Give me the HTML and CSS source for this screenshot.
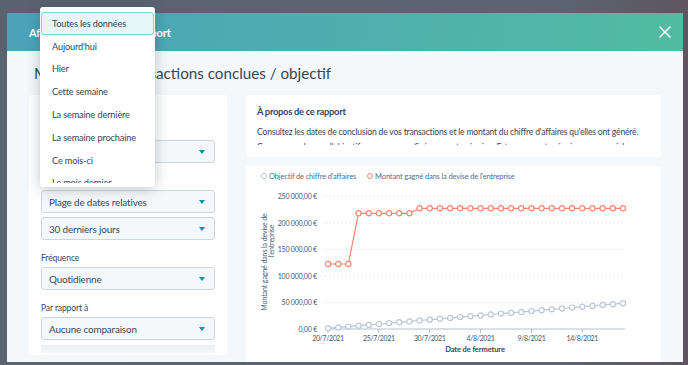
FILE: index.html
```html
<!DOCTYPE html>
<html lang="fr">
<head>
<meta charset="utf-8">
<title>Montant des transactions conclues / objectif</title>
<link rel="stylesheet" href="styles.css">
</head>
<body>
<div class="overlay">
  <div class="modal">
    <header class="modal-header">
      <h1 class="modal-title">Afficher un aperçu du rapport</h1>
      <button class="close" aria-label="Fermer">
        <svg width="12" height="12" viewBox="0 0 12 12"><path d="M1 1L11 11M11 1L1 11" stroke="#fff" stroke-width="1.5" stroke-linecap="round"/></svg>
      </button>
    </header>
    <div class="modal-body">
      <h2 class="report-title">Montant des transactions conclues / objectif</h2>
      <div class="layout">
        <aside class="filters">
          <div class="filters-title">Filtres</div>
          <label class="field-label">Propriété de date</label>
          <div class="select">Date de fermeture<span class="caret"></span></div>
          <label class="field-label">Plage de dates</label>
          <div class="select">Plage de dates relatives<span class="caret"></span></div>
          <div class="select">30 derniers jours<span class="caret"></span></div>
          <label class="field-label">Fréquence</label>
          <div class="select">Quotidienne<span class="caret"></span></div>
          <label class="field-label">Par rapport à</label>
          <div class="select">Aucune comparaison<span class="caret"></span></div>
          <div class="fade-block"></div>
        </aside>
        <div class="right">
          <section class="about">
            <h3>À propos de ce rapport</h3>
            <p>Consultez les dates de conclusion de vos transactions et le montant du chiffre d'affaires qu'elles ont généré. Comparez cela avec l'objectif que vous avez fixé pour votre équipe. Est-ce que votre équipe commerciale atteint ses objectifs ?</p>
          </section>
          <section class="chart-card">
            <div class="legend">
              <span class="legend-item"><span class="ring ring-gray"></span>Objectif de chiffre d'affaires</span>
              <span class="legend-item"><span class="ring ring-orange"></span>Montant gagné dans la devise de l'entreprise</span>
            </div>
            <svg class="chart" width="415" height="178" viewBox="0 0 415 178">
              <defs>
                <marker id="dot-orange" markerUnits="userSpaceOnUse" markerWidth="8" markerHeight="8" refX="4" refY="4" viewBox="0 0 8 8">
                  <circle cx="4" cy="4" r="2.6" fill="#fff" stroke="#f3876e" stroke-width="1.2"/>
                </marker>
                <marker id="dot-gray" markerUnits="userSpaceOnUse" markerWidth="8" markerHeight="8" refX="4" refY="4" viewBox="0 0 8 8">
                  <circle cx="4" cy="4" r="2.6" fill="#fff" stroke="#bcc6d6" stroke-width="1.2"/>
                </marker>
              </defs>
              <g class="grid">
                <line x1="79" y1="12.5" x2="379" y2="12.5"/>
                <line x1="79" y1="39" x2="379" y2="39"/>
                <line x1="79" y1="65.5" x2="379" y2="65.5"/>
                <line x1="79" y1="92" x2="379" y2="92"/>
                <line x1="79" y1="118.5" x2="379" y2="118.5"/>
              </g>
              <g class="ylabels">
                <text x="71" y="15">250 000,00 €</text>
                <text x="71" y="41.5">200 000,00 €</text>
                <text x="71" y="68">150 000,00 €</text>
                <text x="71" y="94.5">100 000,00 €</text>
                <text x="71" y="121">50 000,00 €</text>
                <text x="71" y="147.5">0,00 €</text>
              </g>
              <g class="ytitle">
                <text transform="translate(20.5 78) rotate(-90)">Montant gagné dans la devise de</text>
                <text transform="translate(27.5 57) rotate(-90)">l'entreprise</text>
              </g>
              <line class="axis" x1="79" y1="145" x2="379" y2="145"/>
              <g class="ticks">
                <line x1="82" y1="145" x2="82" y2="149"/>
                <line x1="132.85" y1="145" x2="132.85" y2="149"/>
                <line x1="183.7" y1="145" x2="183.7" y2="149"/>
                <line x1="234.55" y1="145" x2="234.55" y2="149"/>
                <line x1="285.4" y1="145" x2="285.4" y2="149"/>
                <line x1="336.25" y1="145" x2="336.25" y2="149"/>
              </g>
              <g class="xlabels">
                <text x="82" y="156.5">20/7/2021</text>
                <text x="132.85" y="156.5">25/7/2021</text>
                <text x="183.7" y="156.5">30/7/2021</text>
                <text x="234.55" y="156.5">4/8/2021</text>
                <text x="285.4" y="156.5">9/8/2021</text>
                <text x="336.25" y="156.5">14/8/2021</text>
              </g>
              <text class="xtitle" x="229" y="167.5">Date de fermeture</text>
              <polyline class="series-gray" points="82,144.3 92.17,143.4 102.34,142.6 112.51,141.7 122.68,140.9 132.85,140 143.02,139.1 153.19,138.3 163.36,137.4 173.53,136.5 183.7,135.7 193.87,134.8 204.04,133.9 214.21,133.1 224.38,132.2 234.55,131.4 244.72,130.5 254.89,129.6 265.06,128.8 275.23,127.9 285.4,127.1 295.57,126.2 305.74,125.3 315.91,124.5 326.08,123.6 336.25,122.7 346.42,121.9 356.59,121 366.76,120.2 376.93,119.3"/>
              <polyline class="series-orange" points="82,80 92.17,80 102.34,80 112.51,29.3 122.68,29.3 132.85,29.3 143.02,29.3 153.19,29.3 163.36,29.3 173.53,24.3 183.7,24.3 193.87,24.3 204.04,24.3 214.21,24.3 224.38,24.3 234.55,24.3 244.72,24.3 254.89,24.3 265.06,24.3 275.23,24.3 285.4,24.3 295.57,24.3 305.74,24.3 315.91,24.3 326.08,24.3 336.25,24.3 346.42,24.3 356.59,24.3 366.76,24.3 376.93,24.3"/>
            </svg>
          </section>
        </div>
      </div>
    </div>
  </div>
  <div class="menu">
    <ul class="menu-list">
      <li class="active">Toutes les données</li>
      <li>Aujourd'hui</li>
      <li>Hier</li>
      <li>Cette semaine</li>
      <li>La semaine dernière</li>
      <li>La semaine prochaine</li>
      <li>Ce mois-ci</li>
      <li>Le mois dernier</li>
    </ul>
  </div>
</div>
</body>
</html>
```

FILE: styles.css
```css
* { box-sizing: border-box; }

html, body {
  margin: 0;
  height: 365px;
  overflow: hidden;
}

body {
  font-family: Lato, "Open Sans", sans-serif;
  color: #33475b;
  background: linear-gradient(90deg, #59636f 0%, #5b6572 80%, #5e5560 100%);
}

.overlay {
  position: relative;
  height: 365px;
  padding: 13px 5px 0 7px;
}

.modal {
  height: 349px;
  display: flex;
  flex-direction: column;
  background: #f5f8fa;
  overflow: hidden;
}

.modal-header {
  height: 38px;
  flex: none;
  display: flex;
  align-items: center;
  justify-content: space-between;
  padding: 0 12px 0 22px;
  background: linear-gradient(95deg, #4aa3ba 0%, #4fb0ad 55%, #53bba2 100%);
}

.modal-title {
  margin: 0;
  font-size: 11px;
  font-weight: 700;
  letter-spacing: -0.1px;
  color: #fff;
}

.close {
  width: 12px;
  height: 12px;
  padding: 0;
  border: 0;
  background: none;
  display: flex;
}

.modal-body {
  flex: 1;
  min-height: 0;
  padding: 0 22px;
}

.report-title {
  margin: 0;
  height: 44px;
  padding: 12px 0 0 5px;
  font-size: 15.2px;
  line-height: 20px;
  font-weight: 400;
  color: #33475b;
}

.layout {
  display: grid;
  grid-template-columns: 198px 415px;
  gap: 19px;
  height: 267px;
}

.filters {
  align-self: start;
  height: 260px;
  background: #fff;
  border-radius: 3px;
  padding: 12px 12px 0;
  overflow: hidden;
}

.filters-title {
  height: 18px;
  font-size: 10px;
  font-weight: 700;
  line-height: 14px;
}

.field-label {
  display: block;
  font-size: 8.5px;
  letter-spacing: -0.1px;
  line-height: 12px;
  margin-bottom: 3px;
  color: #33475b;
}

.select + .field-label { margin-top: 12px; }
.select + .select { margin-top: 4px; }

.select {
  position: relative;
  height: 23px;
  display: flex;
  align-items: center;
  padding: 0 7px;
  background: #f5f8fa;
  border: 1px solid #cbd6e2;
  border-radius: 3px;
  font-size: 9.9px;
  letter-spacing: -0.15px;
  color: #33475b;
}

.caret {
  margin-left: auto;
  margin-right: 2px;
  width: 0;
  height: 0;
  border-left: 3.5px solid transparent;
  border-right: 3.5px solid transparent;
  border-top: 4px solid #0091ae;
}

.fade-block {
  margin-top: 5px;
  height: 8px;
  background: linear-gradient(180deg, #eaf0f6, #f5f8fa);
}

.right {
  display: flex;
  flex-direction: column;
  gap: 9px;
}

.about {
  height: 62px;
  flex: none;
  background: #fff;
  border-radius: 3px;
  padding: 10px 11px 0;
}

.about h3 {
  margin: 0;
  font-size: 9.4px;
  letter-spacing: -0.3px;
  font-weight: 700;
  line-height: 14px;
}

.about p {
  margin: 6px 0 0;
  height: 20px;
  overflow: hidden;
  font-size: 8.6px;
  letter-spacing: -0.2px;
  line-height: 15px;
}

.chart-card {
  flex: 1;
  background: #fff;
  border-radius: 3px 3px 0 0;
}

.legend {
  display: flex;
  align-items: center;
  height: 12px;
  margin: 4px 0 2px;
  padding-left: 15px;
  font-size: 7.5px;
  letter-spacing: -0.15px;
  color: #516f90;
}

.legend-item {
  display: flex;
  align-items: center;
  margin-right: 11px;
}

.ring {
  width: 6px;
  height: 6px;
  border-radius: 50%;
  margin-right: 2px;
  border: 1.2px solid;
}

.ring-gray { border-color: #bcc6d6; }
.ring-orange { border-color: #f3876e; }

.chart {
  display: block;
  font-family: Lato, "Open Sans", sans-serif;
}

.grid line {
  stroke: #dfe3eb;
  stroke-width: 0.8;
  stroke-dasharray: 2 2;
}

.ylabels text {
  font-size: 7px;
  letter-spacing: -0.2px;
  fill: #425b76;
  text-anchor: end;
}

.ytitle text {
  font-size: 7px;
  letter-spacing: -0.1px;
  fill: #425b76;
  text-anchor: middle;
}

.axis, .ticks line {
  stroke: #b3c0cf;
  stroke-width: 1;
}

.xlabels text {
  font-size: 7px;
  letter-spacing: -0.35px;
  fill: #425b76;
  text-anchor: middle;
}

.xtitle {
  font-size: 7.5px;
  font-weight: 700;
  letter-spacing: -0.1px;
  fill: #33475b;
  text-anchor: middle;
}

.series-gray, .series-orange {
  fill: none;
  stroke-width: 1.2;
}

.series-gray {
  stroke: #bcc6d6;
  marker-start: url(#dot-gray);
  marker-mid: url(#dot-gray);
  marker-end: url(#dot-gray);
}

.series-orange {
  stroke: #f3876e;
  marker-start: url(#dot-orange);
  marker-mid: url(#dot-orange);
  marker-end: url(#dot-orange);
}

.menu {
  position: absolute;
  left: 40px;
  top: 7px;
  width: 115px;
  height: 180px;
  padding: 5px 1px 4px;
  background: #fff;
  border-radius: 3px;
  box-shadow: 0 2px 14px rgba(33, 51, 67, 0.28);
}

.menu-list {
  height: 171px;
  margin: 0;
  padding: 0;
  list-style: none;
  overflow: hidden;
}

.menu-list li {
  height: 22.8px;
  display: flex;
  align-items: center;
  padding-left: 11px;
  font-size: 9.2px;
  letter-spacing: -0.15px;
  color: #33475b;
  white-space: nowrap;
}

.menu-list li.active {
  background: #e5f5f8;
  border: 1px solid #7fd1de;
  border-radius: 3px;
  padding-left: 10px;
}
```
